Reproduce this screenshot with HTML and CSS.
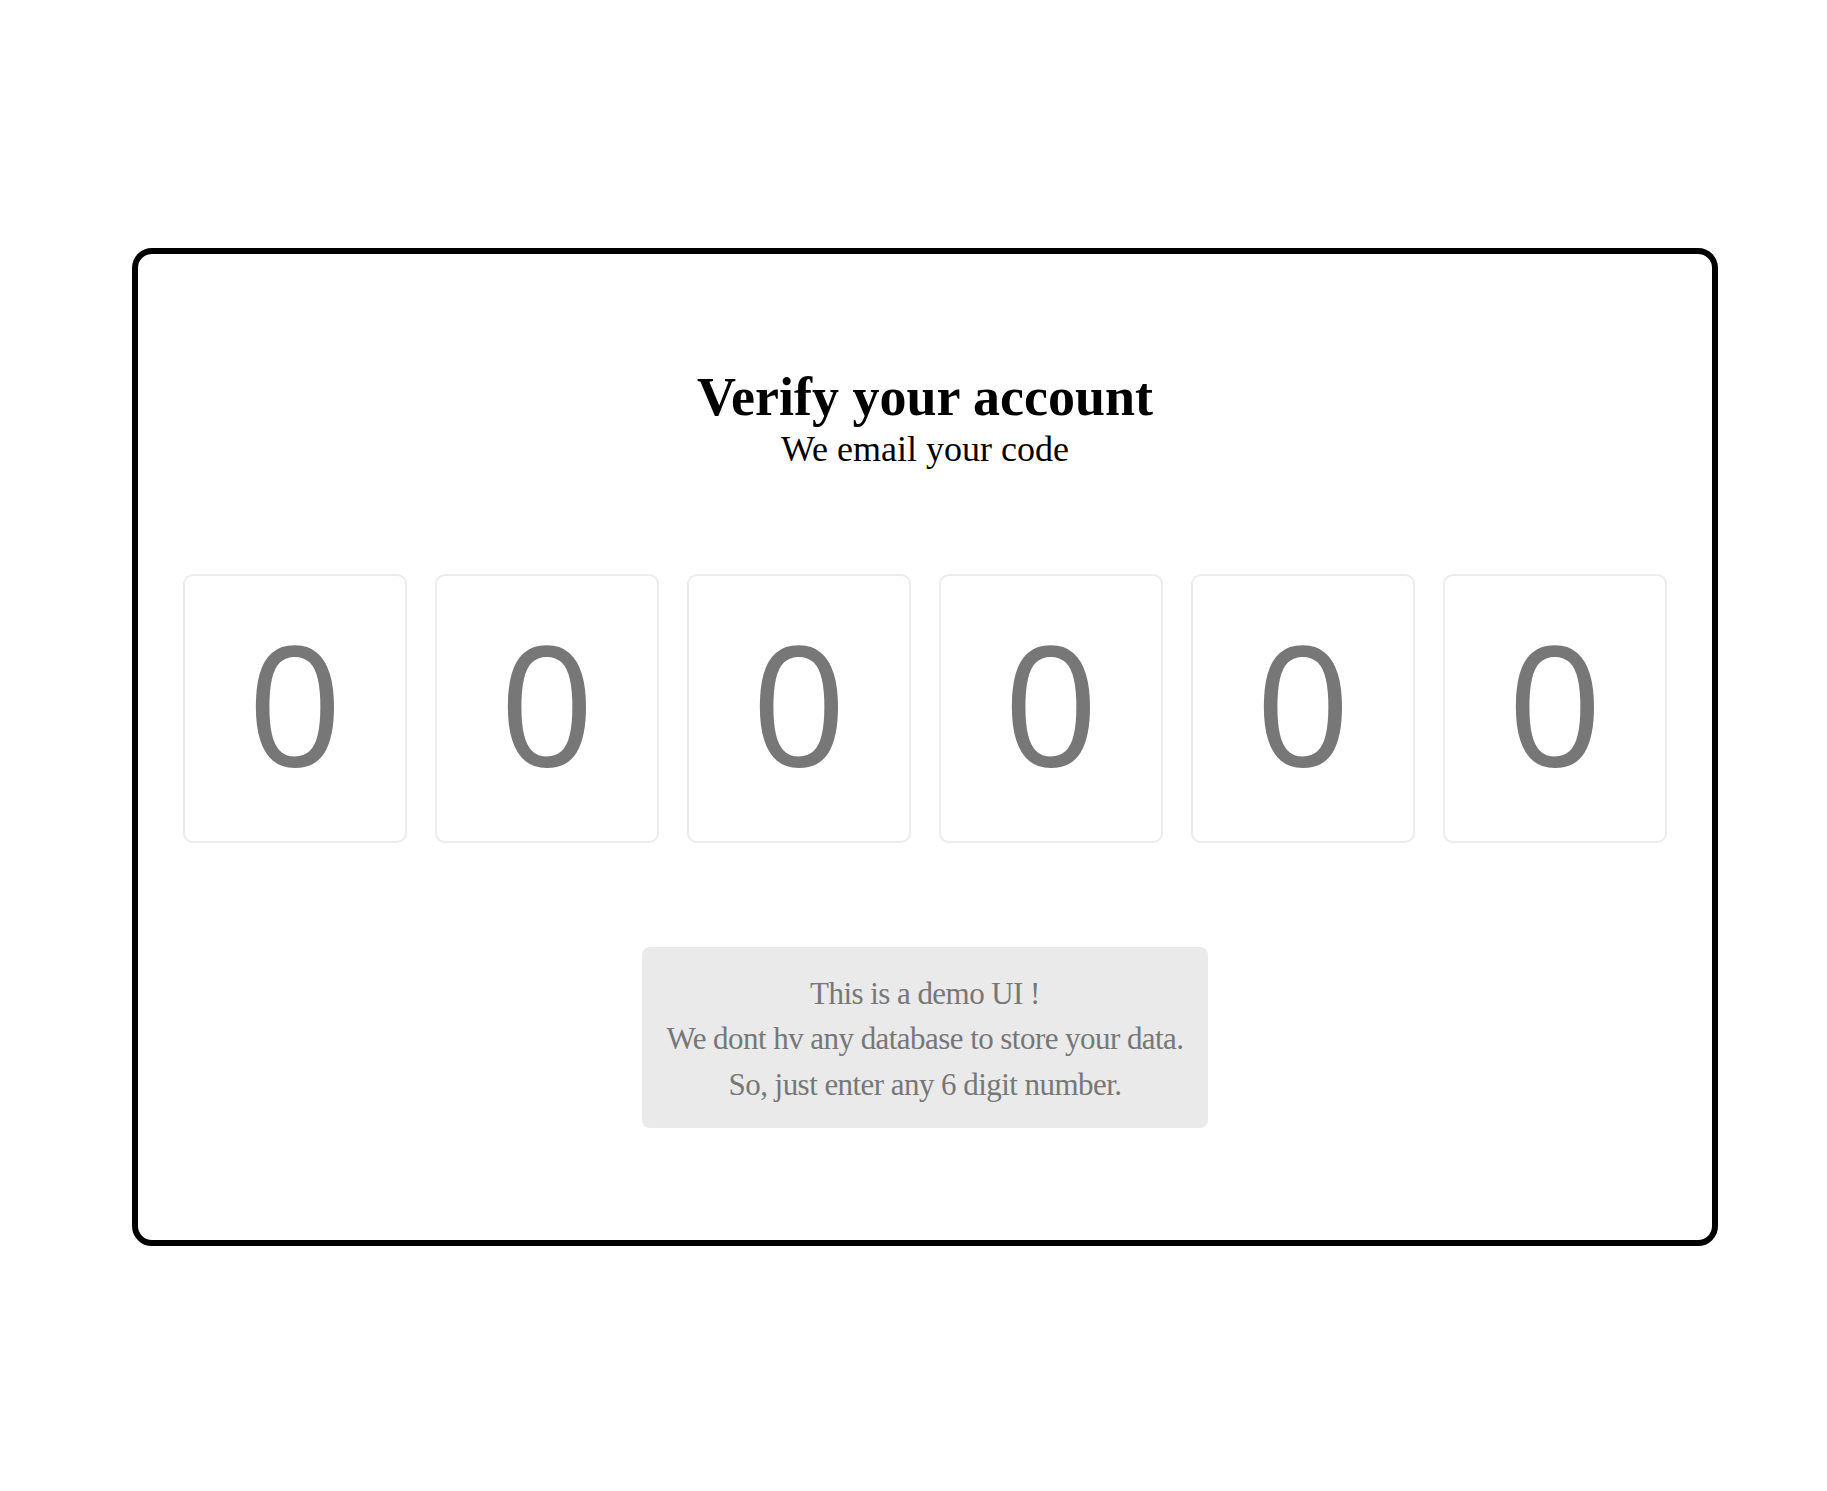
FILE: index.html
```html
<!DOCTYPE html>
<html lang="en">
<head>
<meta charset="utf-8">
<title>Verify your account</title>
<link rel="stylesheet" href="styles.css">
</head>
<body>
<div class="card">
  <div class="head">
    <h1 class="title">Verify your account</h1>
    <p class="subtitle">We email your code</p>
  </div>
  <div class="codes">
    <div class="digit">0</div>
    <div class="digit">0</div>
    <div class="digit">0</div>
    <div class="digit">0</div>
    <div class="digit">0</div>
    <div class="digit">0</div>
  </div>
  <div class="note">
    This is a demo UI !<br>
    We dont hv any database to store your data.<br>
    So, just enter any 6 digit number.
  </div>
</div>
</body>
</html>
```

FILE: styles.css
```css
html, body {
  margin: 0;
  padding: 0;
  background: #ffffff;
}

body {
  font-family: "Liberation Serif", "Times New Roman", serif;
  color: #000;
}

.card {
  box-sizing: border-box;
  width: 1586px;
  height: 998px;
  margin: 248px 0 0 132px;
  border: 6px solid #000;
  border-radius: 20px;
  padding: 113px 0 0 0;
  display: flex;
  flex-direction: column;
  align-items: center;
}

.head {
  text-align: center;
}

.title {
  margin: 0;
  font-size: 54px;
  font-weight: bold;
  line-height: 61px;
}

.subtitle {
  margin: 0;
  font-size: 36px;
  line-height: 43px;
}

.codes {
  margin-top: 103px;
  display: flex;
  gap: 28px;
  justify-content: center;
}

.digit {
  box-sizing: border-box;
  width: 224px;
  height: 269px;
  border: 2px solid #ececec;
  border-radius: 10px;
  display: flex;
  align-items: center;
  justify-content: center;
  padding-bottom: 14px;
  font-family: "Open Sans", "Noto Sans", sans-serif;
  font-size: 166px;
  line-height: 1;
  color: #777777;
}

.note {
  margin-top: 104px;
  background: #eaeaea;
  border-radius: 8px;
  padding: 24px 24px 21px;
  text-align: center;
  font-size: 31px;
  letter-spacing: -0.55px;
  line-height: 45.4px;
  color: #777777;
}
```
